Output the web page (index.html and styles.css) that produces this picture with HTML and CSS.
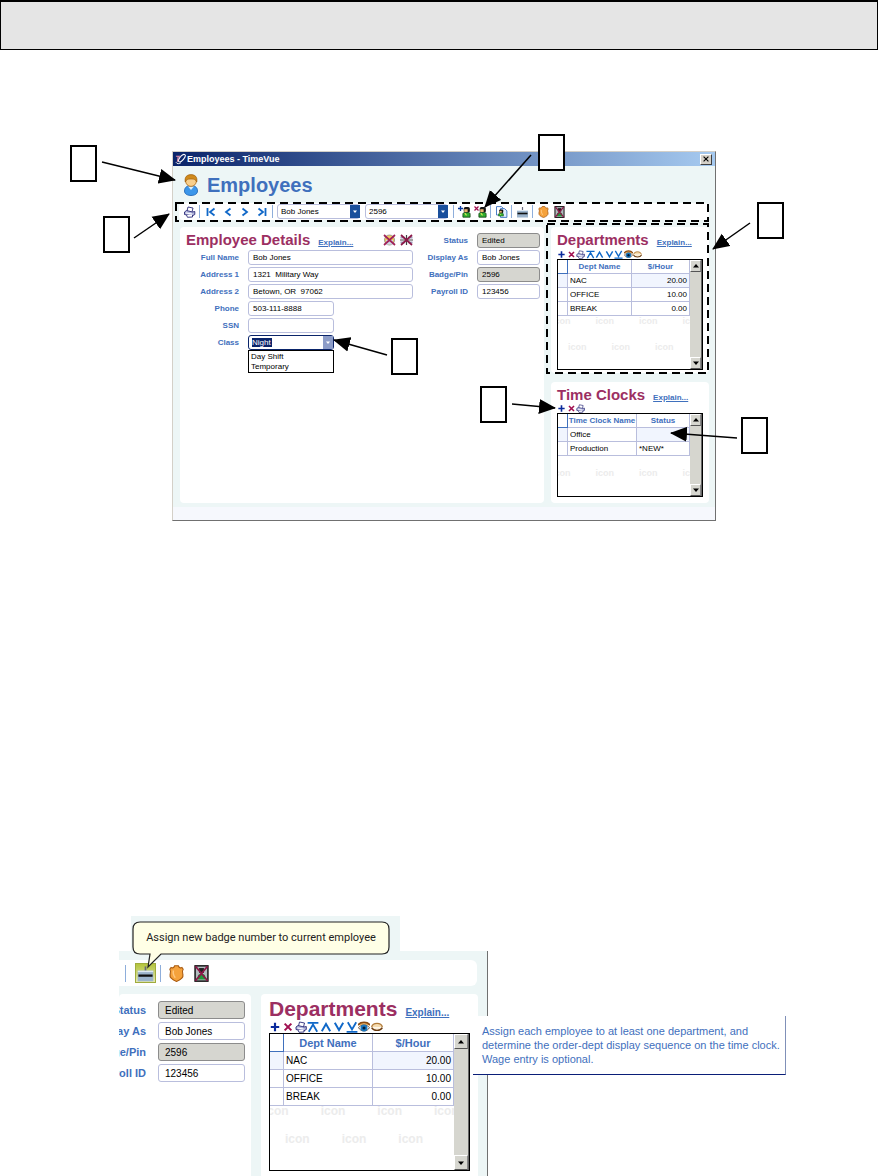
FILE: index.html
```
<!DOCTYPE html>
<html lang="en">
<head>
  <meta charset="utf-8">
  <title>Employees - TimeVue</title>
  <link rel="stylesheet" href="styles.css">
</head>
<body>

  <!-- Icon sprite -->
  <svg class="sprite" width="0" height="0" aria-hidden="true">
    <symbol id="i-logo" viewBox="0 0 12 12">
      <ellipse cx="7.5" cy="5" rx="2.2" ry="5" transform="rotate(40 7.5 5)" fill="none" stroke="#fff" stroke-width="1.2"/>
      <path d="M1 3h5M3.6 3L2.6 9" stroke="#e08aa8" stroke-width="1.3" fill="none"/>
      <path d="M1 9.5c1 2 4 2 5.5 .5" stroke="#fff" fill="none"/>
    </symbol>
    <symbol id="i-user" viewBox="0 0 16 22">
      <path d="M1.500 17c0-4 3-5.500 6.500-5.500s6.500 1.500 6.500 5.500c0 3-3 4.500-6.500 4.500s-6.500-1.500-6.500-4.500z" fill="#3c96ea" stroke="#1c60b0" stroke-width=".8"/>
      <path d="M5 12.500l3 3.500 3-3.500z" fill="#d8efff"/>
      <circle cx="8" cy="7" r="5.400" fill="#f9cf8c" stroke="#b06a10" stroke-width=".8"/>
      <path d="M2.200 8C1.300 3 4 .6 8 .6s6.700 2.400 5.800 7.400C12.500 5.500 11.500 5 8 5S3.500 5.500 2.200 8z" fill="#d08a1c" stroke="#96560a" stroke-width=".6"/>
    </symbol>
    <symbol id="i-print" viewBox="0 0 12 12">
      <path d="M3.500 5L4.500 1l5 1-1 4" fill="#fff" stroke="#2a2a78" stroke-width=".9"/>
      <path d="M1 6l2-1.500 6 1.500 2.300-.5v3L8.500 10 1 8.500z" fill="#b4b8dc" stroke="#2a2a78" stroke-width=".9"/>
      <path d="M3 9l1 2.300 5-.3V9" fill="#fff" stroke="#2a2a78" stroke-width=".9"/>
      <path d="M2.500 7l6 1" stroke="#fff"/>
    </symbol>
    <symbol id="i-first" viewBox="0 0 10 10"><path d="M1.500 1v8M8.500 1.500L4 5l4.500 3.500" fill="none" stroke="#1068c8" stroke-width="1.800"/></symbol>
    <symbol id="i-prev" viewBox="0 0 10 10"><path d="M7.500 1.500L3 5l4.500 3.500" fill="none" stroke="#1068c8" stroke-width="1.800"/></symbol>
    <symbol id="i-next" viewBox="0 0 10 10"><path d="M2.500 1.500L7 5 2.500 8.500" fill="none" stroke="#1068c8" stroke-width="1.800"/></symbol>
    <symbol id="i-last" viewBox="0 0 10 10"><path d="M8.500 1v8M1.500 1.500L6 5 1.500 8.500" fill="none" stroke="#1068c8" stroke-width="1.800"/></symbol>
    <symbol id="i-person" viewBox="0 0 8 10">
      <rect x="1.500" y=".5" width="5.500" height="5" rx="1.500" fill="#141414"/>
      <rect x="2" y="2.500" width="3" height="2.500" fill="#e8b070"/>
      <path d="M.8 9.600V7c0-1 .7-1.500 1.700-1.500h3c1 0 1.700.5 1.700 1.500v2.600z" fill="#2fae2f" stroke="#123c12" stroke-width=".7"/>
      <path d="M2.500 6l1.500 2" stroke="#d8e858"/>
    </symbol>
    <symbol id="i-person-add" viewBox="0 0 13 12">
      <path d="M2.500 0v5M0 2.500h5" stroke="#0a3a9c" stroke-width="1.300"/>
      <use href="#i-person" x="4" y="0" width="9" height="12"/>
    </symbol>
    <symbol id="i-person-del" viewBox="0 0 13 12">
      <path d="M.5.5l4 4M4.500.5l-4 4" stroke="#a01050" stroke-width="1.200"/>
      <use href="#i-person" x="4" y="0" width="9" height="12"/>
    </symbol>
    <symbol id="i-copy" viewBox="0 0 12 12">
      <path d="M1 .6h5l2 2V9H1z" fill="#fff" stroke="#3a70c0" stroke-width=".9"/>
      <path d="M5 2.600h4l2.400 2.200v6.600H5z" fill="#dcecff" stroke="#3a70c0" stroke-width=".9"/>
      <use href="#i-person" x="2.500" y="3" width="6" height="7.500"/>
    </symbol>
    <symbol id="i-card" viewBox="0 0 12 12">
      <path d="M6 1v4" stroke="#667" stroke-width="1.200"/>
      <rect x=".5" y="4" width="11" height="7.500" fill="#9cb4cc"/>
      <path d="M.5 4.500h11" stroke="#dfe9f2"/>
      <path d="M1 7.500h10" stroke="#111" stroke-width="1.600"/>
    </symbol>
    <symbol id="i-shield" viewBox="0 0 12 14">
      <path d="M1.500 2c1 .8 2.500.2 3-1.400h3c.5 1.600 2 2.200 3 1.400l1 1.500c-1.200 1.500-.6 3-.2 4.500.5 2.500-1.800 4.200-5.300 5.500C2.500 12.200.2 10.500.7 8c.4-1.500 1-3-.2-4.500z" fill="#f5a23c" stroke="#a85a10" stroke-width=".9"/>
      <path d="M3.500 4.500c-.6 2 0 4 1.500 6" stroke="#ffc880" stroke-width="1.200" fill="none"/>
    </symbol>
    <symbol id="i-photo-del" viewBox="0 0 12 14">
      <rect x=".7" y=".7" width="10.600" height="12.600" fill="#b4bcc0" stroke="#111" stroke-width="1.200"/>
      <path d="M4 2.500h4v4H4z" fill="#222"/><path d="M3 12V9c0-2 6-2 6 0v3z" fill="#1f9a3a"/>
      <path d="M1 1l10 12M11 1L1 13" stroke="#8c1848" stroke-width="1.500"/>
    </symbol>
    <symbol id="i-key-del" viewBox="0 0 13 12">
      <circle cx="6.500" cy="6" r="5" fill="#f3c860" stroke="#8a8a8a" stroke-width=".8"/>
      <path d="M3 6h7v4.500H3z" fill="#cfd8e8"/>
      <path d="M1 1l11 10M12 1L1 11" stroke="#a02058" stroke-width="1.700"/>
    </symbol>
    <symbol id="i-flag-del" viewBox="0 0 13 12">
      <path d="M.5 2.500h4v2h-4zM.5 7.500h4v2h-4zM8.500 2.500h4v2h-4zM8.500 7.500h4v2h-4z" fill="#9a9ab8"/>
      <path d="M6.500 1v10M0 6h13" stroke="#444" stroke-width="1.200"/>
      <path d="M1 1l11 10M12 1L1 11" stroke="#8c1848" stroke-width="1.700"/>
    </symbol>
    <symbol id="i-add" viewBox="0 0 10 10"><path d="M5 1.500v7M1.500 5h7" stroke="#0a2a9c" stroke-width="1.800"/></symbol>
    <symbol id="i-del" viewBox="0 0 10 10"><path d="M2.200 2.200l5.600 5.600M7.800 2.200L2.200 7.800" stroke="#a01050" stroke-width="1.700"/></symbol>
    <symbol id="i-top" viewBox="0 0 10 10"><path d="M.5 1.500h9M1.500 9L5 3l3.500 6" fill="none" stroke="#1068c8" stroke-width="1.500"/></symbol>
    <symbol id="i-up" viewBox="0 0 10 10"><path d="M1.500 8.500L5 2.500l3.500 6" fill="none" stroke="#1068c8" stroke-width="1.600"/></symbol>
    <symbol id="i-down" viewBox="0 0 10 10"><path d="M1.500 1.500L5 7.500l3.500-6" fill="none" stroke="#1068c8" stroke-width="1.600"/></symbol>
    <symbol id="i-bottom" viewBox="0 0 10 10"><path d="M.5 9h9M1.500 1L5 7l3.500-6" fill="none" stroke="#1068c8" stroke-width="1.500"/></symbol>
    <symbol id="i-eye" viewBox="0 0 10 10">
      <path d="M0 3.500C2 .2 8 .2 10 3.500" fill="#e0a860" stroke="#8a4a10" stroke-width="1.300"/>
      <path d="M.5 5.500C2 2.800 8 2.800 9.500 5.500 8 9.200 2 9.200.5 5.500z" fill="#eef6ff" stroke="#5a3a20" stroke-width=".7"/>
      <circle cx="5" cy="5.800" r="2.900" fill="#1a78c0"/><circle cx="5" cy="5.800" r="1.300" fill="#021c38"/>
    </symbol>
    <symbol id="i-eye-off" viewBox="0 0 10 10">
      <path d="M.5 5C1.500 1 8.500 1 9.500 5" fill="#f6dcb0" stroke="#b07a38" stroke-width="1.100"/>
      <path d="M.5 5.500C2 8.600 8 8.600 9.500 5.500" fill="#fbeed6" stroke="#6a3a10" stroke-width="1.200"/>
    </symbol>
    <symbol id="i-caret" viewBox="0 0 10 12"><path d="M3 5h4L5 7.500z" fill="#fff"/></symbol>
    <symbol id="i-tri-up" viewBox="0 0 12 12"><path d="M3 7.500h6L6 4z" fill="#000"/></symbol>
    <symbol id="i-tri-down" viewBox="0 0 12 12"><path d="M3 4.500h6L6 8z" fill="#000"/></symbol>
    <symbol id="i-close" viewBox="0 0 10 10"><path d="M2 2l6 6M8 2L2 8" stroke="#000" stroke-width="1.400"/></symbol>
  </svg>

  <header class="page-header"></header>

  <section class="figure">
    <div class="window">
      <div class="titlebar">
        <svg class="logo"><use href="#i-logo"/></svg>
        <span>Employees - TimeVue</span>
        <button class="close" aria-label="Close"><svg><use href="#i-close"/></svg></button>
      </div>

      <div class="heading">
        <svg><use href="#i-user"/></svg>
        <h1>Employees</h1>
      </div>

      <div class="toolbar">
        <button class="tool" aria-label="Print"><svg><use href="#i-print"/></svg></button>
        <i class="sep"></i>
        <button class="nav" aria-label="First"><svg><use href="#i-first"/></svg></button>
        <button class="nav" aria-label="Previous"><svg><use href="#i-prev"/></svg></button>
        <button class="nav" aria-label="Next"><svg><use href="#i-next"/></svg></button>
        <button class="nav" aria-label="Last"><svg><use href="#i-last"/></svg></button>
        <i class="sep"></i>
        <span class="combo">
          <select aria-label="Employee"><option>Bob Jones</option></select>
          <svg><use href="#i-caret"/></svg>
        </span>
        <span class="combo">
          <select aria-label="Badge"><option>2596</option></select>
          <svg><use href="#i-caret"/></svg>
        </span>
        <i class="sep"></i>
        <button class="tool" aria-label="Add employee"><svg><use href="#i-person-add"/></svg></button>
        <button class="tool" aria-label="Delete employee"><svg><use href="#i-person-del"/></svg></button>
        <i class="sep"></i>
        <button class="tool" aria-label="Copy employee"><svg><use href="#i-copy"/></svg></button>
        <i class="sep"></i>
        <button class="tool" aria-label="Assign badge"><svg><use href="#i-card"/></svg></button>
        <i class="sep"></i>
        <button class="tool" aria-label="Security"><svg><use href="#i-shield"/></svg></button>
        <button class="tool" aria-label="Remove photo"><svg><use href="#i-photo-del"/></svg></button>
      </div>

      <div class="panels">
        <div class="panel details">
          <div class="details-main">
            <div class="panel-title">
              <h2>Employee Details</h2>
              <a href="#">Explain...</a>
              <span class="title-tools">
                <button aria-label="Clear key"><svg><use href="#i-key-del"/></svg></button>
                <button aria-label="Clear flag"><svg><use href="#i-flag-del"/></svg></button>
              </span>
            </div>
            <div class="field"><label for="name">Full Name</label><input id="name" value="Bob Jones"></div>
            <div class="field"><label for="addr1">Address 1</label><input id="addr1" value="1321  Military Way"></div>
            <div class="field"><label for="addr2">Address 2</label><input id="addr2" value="Betown, OR  97062"></div>
            <div class="field short"><label for="phone">Phone</label><input id="phone" value="503-111-8888"></div>
            <div class="field short"><label for="ssn">SSN</label><input id="ssn"></div>
            <div class="field short">
              <label for="class">Class</label>
              <span class="combo open">
                <select id="class"><option>Night</option></select>
                <svg><use href="#i-caret"/></svg>
                <ul class="menu">
                  <li>Day Shift</li>
                  <li>Temporary</li>
                </ul>
              </span>
            </div>
          </div>
          <div class="details-side">
            <div class="field"><label for="status">Status</label><input id="status" class="locked" value="Edited" readonly></div>
            <div class="field"><label for="display">Display As</label><input id="display" value="Bob Jones"></div>
            <div class="field"><label for="badge">Badge/Pin</label><input id="badge" class="locked" value="2596" readonly></div>
            <div class="field"><label for="payroll">Payroll ID</label><input id="payroll" value="123456"></div>
          </div>
        </div>

        <div class="side">
          <div class="panel departments">
            <div class="panel-title"><h2>Departments</h2><a href="#">Explain...</a></div>
            <div class="mini-tools">
              <button aria-label="Add"><svg><use href="#i-add"/></svg></button>
              <button aria-label="Delete"><svg><use href="#i-del"/></svg></button>
              <button aria-label="Print"><svg><use href="#i-print"/></svg></button>
              <button aria-label="Move to top"><svg><use href="#i-top"/></svg></button>
              <button aria-label="Move up"><svg><use href="#i-up"/></svg></button>
              <button aria-label="Move down"><svg><use href="#i-down"/></svg></button>
              <button aria-label="Move to bottom"><svg><use href="#i-bottom"/></svg></button>
              <button aria-label="Show"><svg><use href="#i-eye"/></svg></button>
              <button aria-label="Hide"><svg><use href="#i-eye-off"/></svg></button>
            </div>
            <div class="grid">
              <div class="grid-body">
                <table>
                  <colgroup><col class="handle"><col><col class="hour"></colgroup>
                  <thead><tr><th></th><th>Dept Name</th><th>$/Hour</th></tr></thead>
                  <tbody>
                    <tr class="current"><td></td><td>NAC</td><td class="num">20.00</td></tr>
                    <tr><td></td><td>OFFICE</td><td class="num">10.00</td></tr>
                    <tr><td></td><td>BREAK</td><td class="num">0.00</td></tr>
                  </tbody>
                </table>
                <div class="marks"><span>icon</span><span>icon</span><span>icon</span><span>icon</span></div>
                <div class="marks shifted"><span>icon</span><span>icon</span><span>icon</span></div>
              </div>
              <div class="scroll">
                <button aria-label="Scroll up"><svg><use href="#i-tri-up"/></svg></button>
                <button aria-label="Scroll down"><svg><use href="#i-tri-down"/></svg></button>
              </div>
            </div>
          </div>

          <div class="panel clocks">
            <div class="panel-title"><h2>Time Clocks</h2><a href="#">Explain...</a></div>
            <div class="mini-tools few">
              <button aria-label="Add"><svg><use href="#i-add"/></svg></button>
              <button aria-label="Delete"><svg><use href="#i-del"/></svg></button>
              <button aria-label="Print"><svg><use href="#i-print"/></svg></button>
            </div>
            <div class="grid">
              <div class="grid-body">
                <table>
                  <colgroup><col class="handle"><col><col class="state"></colgroup>
                  <thead><tr><th></th><th>Time Clock Name</th><th>Status</th></tr></thead>
                  <tbody>
                    <tr class="current"><td></td><td>Office</td><td></td></tr>
                    <tr><td></td><td>Production</td><td>*NEW*</td></tr>
                  </tbody>
                </table>
                <div class="marks low"><span>icon</span><span>icon</span><span>icon</span><span>icon</span></div>
              </div>
              <div class="scroll">
                <button aria-label="Scroll up"><svg><use href="#i-tri-up"/></svg></button>
                <button aria-label="Scroll down"><svg><use href="#i-tri-down"/></svg></button>
              </div>
            </div>
          </div>
        </div>
      </div>

      <div class="statusbar"></div>
    </div>

    <!-- Callout boxes, arrows and dashed outlines drawn over the window -->
    <svg class="callouts" viewBox="0 134 878 390" aria-hidden="true">
      <defs>
        <marker id="head" markerUnits="userSpaceOnUse" markerWidth="17" markerHeight="16" refX="16" refY="8" orient="auto">
          <path d="M0 .5L17 8 0 15.500z"/>
        </marker>
      </defs>
      <g fill="#fff" stroke="#000" stroke-width="2">
        <rect x="71" y="146" width="25" height="35"/>
        <rect x="104" y="217" width="25" height="35"/>
        <rect x="539" y="135" width="25" height="35"/>
        <rect x="758" y="203" width="25" height="35"/>
        <rect x="392" y="339" width="25" height="35"/>
        <rect x="481" y="387" width="25" height="35"/>
        <rect x="742" y="418" width="25" height="35"/>
      </g>
      <g fill="none" stroke="#000" stroke-width="2" stroke-dasharray="8 5">
        <rect x="176" y="203" width="532" height="18"/>
        <rect x="547" y="224" width="161" height="149"/>
      </g>
      <g stroke="#000" stroke-width="1.500">
        <path d="M102 162L175 180" marker-end="url(#head)"/>
        <path d="M134 238L169 214" marker-end="url(#head)"/>
        <path d="M531 155L485 207" marker-end="url(#head)"/>
        <path d="M750 223L713 249" marker-end="url(#head)"/>
        <path d="M387 355L334 340" marker-end="url(#head)"/>
        <path d="M512 404L555 408" marker-end="url(#head)"/>
        <path d="M737 438L671 433" marker-end="url(#head)"/>
      </g>
    </svg>
  </section>

  <section class="figure closeup">
    <div class="strip"></div>
    <div class="crop">
      <div class="toolbar">
        <i class="sep"></i>
        <button class="tool active" aria-label="Assign badge"><svg><use href="#i-card"/></svg></button>
        <i class="sep"></i>
        <button class="tool" aria-label="Security"><svg><use href="#i-shield"/></svg></button>
        <button class="tool" aria-label="Remove photo"><svg><use href="#i-photo-del"/></svg></button>
      </div>
      <div class="panels">
        <div class="panel details">
          <div class="field"><label for="status2">Status</label><input id="status2" class="locked" value="Edited" readonly></div>
          <div class="field"><label for="display2">Display As</label><input id="display2" value="Bob Jones"></div>
          <div class="field"><label for="badge2">Badge/Pin</label><input id="badge2" class="locked" value="2596" readonly></div>
          <div class="field"><label for="payroll2">Payroll ID</label><input id="payroll2" value="123456"></div>
        </div>
        <div class="panel departments">
          <div class="panel-title"><h2>Departments</h2><a href="#">Explain...</a></div>
          <div class="mini-tools">
            <button aria-label="Add"><svg><use href="#i-add"/></svg></button>
            <button aria-label="Delete"><svg><use href="#i-del"/></svg></button>
            <button aria-label="Print"><svg><use href="#i-print"/></svg></button>
            <button aria-label="Move to top"><svg><use href="#i-top"/></svg></button>
            <button aria-label="Move up"><svg><use href="#i-up"/></svg></button>
            <button aria-label="Move down"><svg><use href="#i-down"/></svg></button>
            <button aria-label="Move to bottom"><svg><use href="#i-bottom"/></svg></button>
            <button aria-label="Show"><svg><use href="#i-eye"/></svg></button>
            <button aria-label="Hide"><svg><use href="#i-eye-off"/></svg></button>
          </div>
          <div class="grid">
            <div class="grid-body">
              <table>
                <colgroup><col class="handle"><col><col class="hour"></colgroup>
                <thead><tr><th></th><th>Dept Name</th><th>$/Hour</th></tr></thead>
                <tbody>
                  <tr class="current"><td></td><td>NAC</td><td class="num">20.00</td></tr>
                  <tr><td></td><td>OFFICE</td><td class="num">10.00</td></tr>
                  <tr><td></td><td>BREAK</td><td class="num">0.00</td></tr>
                </tbody>
              </table>
              <div class="marks"><span>icon</span><span>icon</span><span>icon</span><span>icon</span></div>
              <div class="marks shifted"><span>icon</span><span>icon</span><span>icon</span></div>
            </div>
            <div class="scroll">
              <button aria-label="Scroll up"><svg><use href="#i-tri-up"/></svg></button>
              <button aria-label="Scroll down"><svg><use href="#i-tri-down"/></svg></button>
            </div>
          </div>
        </div>
      </div>
    </div>

    <div class="tooltip" role="tooltip">
      <svg viewBox="0 0 258 48" aria-hidden="true">
        <path d="M8 1h242q7 0 7 7v18q0 7-7 7H29L16 46l2-13H8q-7 0-7-7V8q0-7 7-7z" fill="#ffffe6" stroke="#222" stroke-width="1.200"/>
      </svg>
      <span>Assign new badge number to current employee</span>
    </div>

    <p class="explain-box">Assign each employee to at least one department, and determine the order-dept display sequence on the time clock. Wage entry is optional.</p>
  </section>

</body>
</html>
```

FILE: styles.css
```
* {
  box-sizing: border-box;
}

:root {
  --blue: #3f70bd;
  --maroon: #9c2f62;
  --line: #b9bedd;
  --mist: #edf6f6;
  --navy: #0a246a;
}

body {
  margin: 0;
  background: #fff;
  color: #000;
  font-family: "Liberation Sans", Arial, sans-serif;
  font-size: 8px;
  overflow-x: hidden;
}

button {
  display: flex;
  align-items: center;
  justify-content: center;
  padding: 0;
  border: 0;
  background: none;
  cursor: pointer;
}

h1, h2, p, ul {
  margin: 0;
  padding: 0;
}

.sprite {
  position: absolute;
}

.page-header {
  height: 50px;
  background: #e5e5e5;
  border: 1px solid #000;
  border-top-width: 2px;
}

/* Sizes shared by both figures, the close-up overrides them */
.figure {
  --text: 8px;
  --label: 8px;
  --title: 15px;
  --title-line: 17px;
  --input: 15px;
  --row: 14px;
  --handle: 10px;
  --col: 58px;
  --mini: 9px;
  --bar: 12px;
  position: relative;
  max-width: 878px;
  margin: 84px auto 0;
  padding: 17px 162px 0 172px;
}

.window {
  background: var(--mist);
  border: 1px solid #d4d0c8;
  border-right-color: #707070;
  border-bottom-color: #707070;
}

/* Title bar */
.titlebar {
  display: flex;
  align-items: center;
  height: 14px;
  padding: 0 3px 0 2px;
  gap: 1px;
  background: linear-gradient(to right, #0a246a, #a6caf0);
  color: #fff;
  font-size: 9px;
  font-weight: bold;
}
.titlebar .logo {
  width: 11px;
  height: 12px;
}
.close {
  width: 12px;
  height: 11px;
  margin-left: auto;
  background: #d4d0c8;
  border: 1px solid;
  border-color: #fff #404040 #404040 #fff;
}
.close svg {
  width: 8px;
  height: 8px;
}

.heading {
  display: flex;
  align-items: center;
  gap: 8px;
  height: 37px;
  padding-left: 10px;
}
.heading svg {
  width: 16px;
  height: 22px;
}
h1 {
  color: var(--blue);
  font-size: 20px;
  line-height: 24px;
}

/* Toolbar */
.toolbar {
  display: flex;
  align-items: center;
  height: 17px;
  margin: 0 6px;
  padding-left: 2px;
  background: #fff;
  border-radius: 4px;
}
.tool {
  width: 16px;
  height: 15px;
}
.tool svg {
  width: 13px;
  height: 12px;
}
.nav {
  width: 17px;
  height: 15px;
}
.nav svg {
  width: 10px;
  height: 10px;
}
.sep {
  width: 1px;
  height: 13px;
  margin: 0 2px;
  background: #8eaedb;
}

/* Text boxes and drop-downs */
input, select {
  width: 100%;
  height: var(--input);
  margin: 0;
  padding: 0 4px;
  border: 1px solid var(--line);
  border-radius: 3px;
  background: #fff;
  color: #000;
  font: var(--text) "Liberation Sans", Arial, sans-serif;
  white-space: pre;
}
.locked {
  background: #d6d6d0;
  border-color: #8c8c8c;
}
select {
  appearance: none;
  padding: 0 3px;
}
.combo {
  position: relative;
  display: flex;
  width: 83px;
  margin: 0 3px 0 2px;
}
.combo svg {
  position: absolute;
  top: 1px;
  right: 0;
  width: 10px;
  height: 13px;
  background: #1a4f9c;
  pointer-events: none;
}
.open select {
  border-color: var(--navy);
  background: linear-gradient(var(--navy), var(--navy)) no-repeat 3px 2px / 20px 9px;
  color: #fff;
}
.open svg {
  right: 1px;
  background: #8c9cc8;
}
.menu {
  position: absolute;
  top: 15px;
  left: 0;
  width: 100%;
  height: 23px;
  padding: 1px 2px;
  background: #fff;
  border: 1px solid #000;
  list-style: none;
  line-height: 10px;
}

/* Panels */
.panels {
  display: flex;
  gap: 7px;
  padding: 7px 6px 4px 7px;
}
.panel {
  background: #fff;
  border-radius: 4px;
}
.panel-title {
  display: flex;
  align-items: baseline;
  gap: 8px;
}
h2 {
  color: var(--maroon);
  font-size: var(--title);
  line-height: var(--title-line);
  white-space: nowrap;
}
a {
  color: var(--blue);
  font-size: var(--label);
  font-weight: bold;
}
.details {
  display: flex;
  flex: 1;
  gap: 12px;
  padding: 4px 4px 0 6px;
}
.details-main {
  flex: 1;
}
.details-main .panel-title {
  margin-bottom: 2px;
}
.details-side {
  width: 115px;
  padding-top: 2px;
}
.title-tools {
  display: flex;
  align-self: center;
  gap: 4px;
  margin-left: auto;
}
.title-tools svg {
  width: 13px;
  height: 12px;
}
.field {
  display: flex;
  align-items: center;
  gap: 9px;
  margin-bottom: 2px;
}
.field label {
  flex: none;
  width: 53px;
  color: var(--blue);
  font-size: var(--label);
  font-weight: bold;
  text-align: right;
  white-space: nowrap;
}
.details-side label {
  width: 43px;
}
.short input, .short .combo {
  width: 86px;
  margin: 0;
}

.side {
  display: flex;
  flex-direction: column;
  gap: 9px;
  width: 158px;
}
.departments, .clocks {
  padding: 4px 6px 3px;
}
.departments .panel-title {
  margin-bottom: 2px;
}
.clocks {
  padding-bottom: 6px;
}
.clocks .panel-title {
  margin-bottom: 1px;
}

.mini-tools {
  display: flex;
  justify-content: space-between;
  width: 85px;
}
.mini-tools.few {
  width: 28px;
}
.mini-tools svg {
  width: var(--mini);
  height: var(--mini);
}

/* Data grids */
.grid {
  display: flex;
  height: 111px;
  border: 1px solid #000;
}
.clocks .grid {
  height: 84px;
}
.grid-body {
  flex: 1;
  min-width: 0;
  overflow: hidden;
}
table {
  width: 100%;
  border-collapse: separate;
  border-spacing: 0;
  table-layout: fixed;
}
.handle {
  width: var(--handle);
}
.hour {
  width: var(--col);
}
.state {
  width: 53px;
}
th, td {
  height: var(--row);
  padding: 0 2px;
  border-right: 1px solid var(--line);
  border-bottom: 1px solid var(--line);
  font-size: var(--text);
  line-height: 10px;
  white-space: nowrap;
}
th {
  padding: 0;
  color: var(--blue);
  font-size: var(--label);
}
th:first-child {
  border-color: var(--blue);
}
.current td:first-child, .current td:last-child {
  background: #f1f5fe;
}
.num {
  text-align: right;
}

/* Watermark behind the empty part of a grid */
.marks {
  display: flex;
  gap: 25px;
  margin: 0 -6px 15px;
  color: #ececec;
  font-size: 9px;
  font-weight: bold;
  line-height: 11px;
}
.marks.shifted {
  margin-left: 10px;
}
.marks.low {
  margin-top: 12px;
}

.scroll {
  display: flex;
  flex-direction: column;
  justify-content: space-between;
  width: var(--bar);
  background: #d6d6cf;
  border-right: 1px solid #666;
}
.scroll button {
  width: 100%;
  height: var(--bar);
  background: #d6d6cf;
  border: 1px solid;
  border-color: #fff #888 #555 #fff;
}
.scroll svg {
  flex: none;
  width: 12px;
  height: 12px;
}

.statusbar {
  height: 13px;
  background: #f6f8fd;
}

.callouts {
  position: absolute;
  top: 0;
  left: 0;
  width: 100%;
  height: 390px;
  pointer-events: none;
}

/* Close-up of the toolbar and the departments panel */
.closeup {
  --text: 10px;
  --label: 11px;
  --title: 21px;
  --title-line: 24px;
  --input: 18px;
  --row: 18px;
  --handle: 14px;
  --col: 81px;
  --mini: 12px;
  --bar: 15px;
  height: 260px;
  margin-top: 395px;
  padding: 0 0 0 119px;
  overflow: hidden;
}
.strip {
  width: 269px;
  height: 35px;
  margin-left: 12px;
  background: var(--mist);
}
.crop {
  width: 369px;
  height: 225px;
  padding-top: 9px;
  background: var(--mist);
  border-right: 1px solid #707070;
  overflow: hidden;
}
.closeup .toolbar {
  height: 26px;
  margin: 0 10px 0 0;
  border-radius: 0 6px 6px 0;
  padding-left: 3px;
}
.closeup .sep {
  height: 17px;
  margin: 0 3px;
}
.closeup .tool {
  width: 25px;
  height: 20px;
}
.closeup .tool svg {
  width: 17px;
  height: 17px;
}
.closeup .active {
  width: 21px;
  margin: 0 1px 0 6px;
  background: linear-gradient(#b4c43c, #e4e8b0);
  border: 1px solid #a0ac3c;
}
.closeup .panels {
  gap: 10px;
  padding: 8px 9px 0 0;
}
.closeup .panel {
  height: 190px;
}
.closeup .details {
  flex: none;
  flex-direction: column;
  gap: 3px;
  width: 132px;
  padding: 7px 6px 0 0;
  overflow: hidden;
}
.closeup .field {
  justify-content: flex-end;
  gap: 12px;
  margin: 0;
}
.closeup .field label {
  width: auto;
}
.closeup .field input {
  flex: none;
  width: 87px;
  padding: 0 6px;
}
.closeup .departments {
  flex: 1;
  padding: 3px 8px 0;
}
.closeup .departments .panel-title {
  margin-bottom: 0;
}
.closeup a {
  font-size: 10px;
}
.closeup .mini-tools {
  width: 114px;
}
.closeup .grid {
  height: 138px;
}
.closeup .marks {
  gap: 32px;
  margin-bottom: 17px;
  font-size: 12px;
}
.closeup .marks.shifted {
  margin-left: 15px;
}

.tooltip {
  position: absolute;
  top: 5px;
  left: 132px;
  width: 258px;
  height: 48px;
}
.tooltip svg {
  position: absolute;
  inset: 0;
}
.tooltip span {
  position: relative;
  display: block;
  color: #222;
  font: 11px/33px Roboto, "Open Sans", sans-serif;
  text-align: center;
  white-space: nowrap;
}

.explain-box {
  position: absolute;
  top: 100px;
  left: 473px;
  width: 313px;
  padding: 8px 3px 8px 9px;
  background: #fff;
  border-right: 1px solid #8090b8;
  border-bottom: 1px solid #0a1e78;
  color: var(--blue);
  font-size: 11px;
  line-height: 14px;
}
```
